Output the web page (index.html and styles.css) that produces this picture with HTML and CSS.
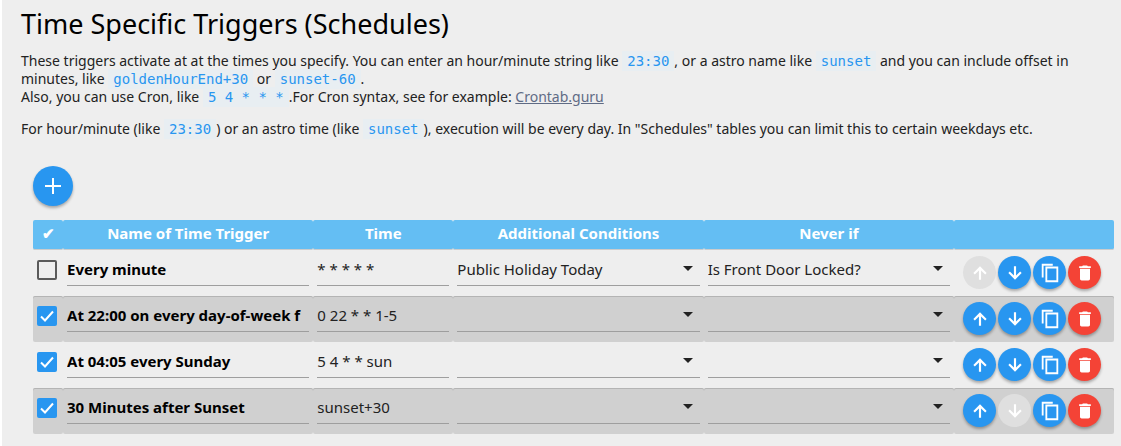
FILE: index.html
```
<!DOCTYPE html>
<html lang="en">
<head>
    <meta charset="UTF-8">
    <meta name="viewport" content="width=device-width, initial-scale=1.0">
    <title>Time Specific Triggers (Schedules)</title>
    <link rel="stylesheet" href="styles.css">
</head>
<body>
    <!-- Icons used by the buttons -->
    <svg class="icon-defs" width="0" height="0" aria-hidden="true">
        <symbol id="icon-add" viewBox="0 0 24 24"><path d="M20 13h-7v7h-2v-7H4v-2h7V4h2v7h7z"/></symbol>
        <symbol id="icon-up" viewBox="0 0 24 24"><path d="M4 12l1.8 1.8L10.700 8.900V20h2.600V8.900l4.900 4.900L20 12l-8-8-8 8z"/></symbol>
        <symbol id="icon-down" viewBox="0 0 24 24"><path d="M20 12l-1.800-1.800-4.900 4.900V4h-2.600v11.100l-4.900-4.900L4 12l8 8 8-8z"/></symbol>
        <symbol id="icon-copy" viewBox="0 0 24 24"><path d="M15 2H3v15h2V4h10V2zm6 3H7v17h14V5zm-2 15H9V7h10v13z"/></symbol>
        <symbol id="icon-delete" viewBox="0 0 24 24"><path d="M6 19c0 1.100.9 2 2 2h8c1.100 0 2-.9 2-2V7H6v12zM19 4h-3.500l-1-1h-5l-1 1H5v2h14V4z"/></symbol>
    </svg>

    <main class="page">
        <h1>Time Specific Triggers (Schedules)</h1>
        <p>These triggers activate at at the times you specify. You can enter an hour/minute string like <code>23:30</code>, or a astro name like <code>sunset</code> and you can include offset in minutes, like <code>goldenHourEnd+30</code> or <code>sunset-60</code>.<br>
        Also, you can use Cron, like <code>5 4 * * *</code>.For Cron syntax, see for example: <a href="https://crontab.guru/">Crontab.guru</a></p>
        <p>For hour/minute (like <code>23:30</code>) or an astro time (like <code>sunset</code>), execution will be every day. In "Schedules" tables you can limit this to certain weekdays etc.</p>

        <div class="table-area">
            <button class="btn btn-add" aria-label="Add"><svg><use href="#icon-add"/></svg></button>

            <table class="triggers">
                <colgroup>
                    <col class="col-active">
                    <col>
                    <col class="col-time">
                    <col>
                    <col>
                    <col class="col-actions">
                </colgroup>
                <thead>
                    <tr>
                        <th>✔</th>
                        <th>Name of Time Trigger</th>
                        <th>Time</th>
                        <th>Additional Conditions</th>
                        <th>Never if</th>
                        <th></th>
                    </tr>
                </thead>
                <tbody>
                    <tr>
                        <td><input type="checkbox" class="check" aria-label="Active"></td>
                        <td><input type="text" class="field name" aria-label="Name" value="Every minute"></td>
                        <td><input type="text" class="field" aria-label="Time" value="* * * * *"></td>
                        <td><select class="field" aria-label="Additional Conditions"><option>Public Holiday Today</option></select></td>
                        <td><select class="field" aria-label="Never if"><option>Is Front Door Locked?</option></select></td>
                        <td>
                            <div class="actions">
                                <button class="btn" aria-label="Move up" disabled><svg><use href="#icon-up"/></svg></button>
                                <button class="btn" aria-label="Move down"><svg><use href="#icon-down"/></svg></button>
                                <button class="btn btn-copy" aria-label="Copy"><svg><use href="#icon-copy"/></svg></button>
                                <button class="btn btn-delete" aria-label="Delete"><svg><use href="#icon-delete"/></svg></button>
                            </div>
                        </td>
                    </tr>
                    <tr>
                        <td><input type="checkbox" class="check" aria-label="Active" checked></td>
                        <td><input type="text" class="field name" aria-label="Name" value="At 22:00 on every day-of-week f"></td>
                        <td><input type="text" class="field" aria-label="Time" value="0 22 * * 1-5"></td>
                        <td><select class="field" aria-label="Additional Conditions"><option></option></select></td>
                        <td><select class="field" aria-label="Never if"><option></option></select></td>
                        <td>
                            <div class="actions">
                                <button class="btn" aria-label="Move up"><svg><use href="#icon-up"/></svg></button>
                                <button class="btn" aria-label="Move down"><svg><use href="#icon-down"/></svg></button>
                                <button class="btn btn-copy" aria-label="Copy"><svg><use href="#icon-copy"/></svg></button>
                                <button class="btn btn-delete" aria-label="Delete"><svg><use href="#icon-delete"/></svg></button>
                            </div>
                        </td>
                    </tr>
                    <tr>
                        <td><input type="checkbox" class="check" aria-label="Active" checked></td>
                        <td><input type="text" class="field name" aria-label="Name" value="At 04:05 every Sunday"></td>
                        <td><input type="text" class="field" aria-label="Time" value="5 4 * * sun"></td>
                        <td><select class="field" aria-label="Additional Conditions"><option></option></select></td>
                        <td><select class="field" aria-label="Never if"><option></option></select></td>
                        <td>
                            <div class="actions">
                                <button class="btn" aria-label="Move up"><svg><use href="#icon-up"/></svg></button>
                                <button class="btn" aria-label="Move down"><svg><use href="#icon-down"/></svg></button>
                                <button class="btn btn-copy" aria-label="Copy"><svg><use href="#icon-copy"/></svg></button>
                                <button class="btn btn-delete" aria-label="Delete"><svg><use href="#icon-delete"/></svg></button>
                            </div>
                        </td>
                    </tr>
                    <tr>
                        <td><input type="checkbox" class="check" aria-label="Active" checked></td>
                        <td><input type="text" class="field name" aria-label="Name" value="30 Minutes after Sunset"></td>
                        <td><input type="text" class="field" aria-label="Time" value="sunset+30"></td>
                        <td><select class="field" aria-label="Additional Conditions"><option></option></select></td>
                        <td><select class="field" aria-label="Never if"><option></option></select></td>
                        <td>
                            <div class="actions">
                                <button class="btn" aria-label="Move up"><svg><use href="#icon-up"/></svg></button>
                                <button class="btn" aria-label="Move down" disabled><svg><use href="#icon-down"/></svg></button>
                                <button class="btn btn-copy" aria-label="Copy"><svg><use href="#icon-copy"/></svg></button>
                                <button class="btn btn-delete" aria-label="Delete"><svg><use href="#icon-delete"/></svg></button>
                            </div>
                        </td>
                    </tr>
                </tbody>
            </table>
        </div>
    </main>
</body>
</html>
```
FILE: styles.css
```
* {
    box-sizing: border-box;
}

body {
    margin: 0;
    border-left: 2px solid #fff;
    background-color: #eee;
    color: #222;
    font-family: "Noto Sans", sans-serif;
    font-size: 14px;
    line-height: 18px;
}

.icon-defs {
    position: absolute;
}

.page {
    min-height: 100vh;
    padding: 8px 7px 12px 19px;
}

h1 {
    margin: 0 0 12px;
    color: #000;
    font-size: 27px;
    font-weight: 400;
    line-height: 32px;
}

p {
    margin: 0 0 14px;
}

code {
    padding: 2px 5px;
    background-color: #e8eef2;
    color: #2896f0;
    font-family: "DejaVu Sans Mono", monospace;
    font-size: 14px;
    line-height: 1;
}

a {
    color: #5f6b85;
}

.table-area {
    padding: 14px 0 0 12px;
}

.btn {
    display: flex;
    align-items: center;
    justify-content: center;
    width: 33px;
    height: 33px;
    padding: 0;
    border: none;
    border-radius: 50%;
    background-color: #2896f0;
    box-shadow: 0 2px 3px rgba(0, 0, 0, 0.3);
    cursor: pointer;
}

.btn svg {
    width: 20px;
    height: 20px;
    fill: #fff;
}

.btn:disabled {
    background-color: #dfdfdf;
    box-shadow: none;
    cursor: default;
}

.btn-delete {
    background-color: #f44336;
}

.btn-copy svg {
    width: 22px;
    height: 22px;
}

.btn-add {
    width: 40px;
    height: 40px;
    margin-bottom: 14px;
}

.btn-add svg {
    width: 24px;
    height: 24px;
}

/* Table */
.triggers {
    width: 100%;
    border-collapse: separate;
    border-spacing: 0;
    table-layout: fixed;
}

.col-active {
    width: 30px;
}

.col-time {
    width: 140px;
}

.col-actions {
    width: 160px;
}

.triggers th {
    height: 30px;
    padding: 0 0 4px;
    border-bottom: 1px solid #ccc;
    border-radius: 2px;
    background-color: #64bef3;
    color: #fff;
    font-size: 15px;
    font-weight: 700;
}

.triggers td {
    height: 46px;
    padding: 2px 4px;
    border-radius: 2px;
    vertical-align: top;
}

.triggers tr:nth-child(even) td {
    background-color: #d0d0d0;
    box-shadow: inset 0 1px #b4b4b4;
}

.field {
    display: block;
    width: 100%;
    height: 34px;
    padding: 0;
    border: none;
    border-bottom: 1px solid #9e9e9e;
    border-radius: 0;
    outline: none;
    background-color: transparent;
    color: #222;
    font-family: "Noto Sans", sans-serif;
    font-size: 15px;
}

.name {
    color: #000;
    font-weight: 700;
}

select.field {
    appearance: none;
    background-image: url("data:image/svg+xml,%3Csvg xmlns='http://www.w3.org/2000/svg' width='10' height='5'%3E%3Cpath d='M0 0h10L5 5z' fill='%23222'/%3E%3C/svg%3E");
    background-repeat: no-repeat;
    background-position: right 7px center;
}

.check {
    appearance: none;
    display: block;
    width: 20px;
    height: 20px;
    margin: 8px 0 0;
    border: 2px solid #5a5a5a;
    border-radius: 2px;
}

.check:checked {
    border: none;
    background: #2896f0 url("data:image/svg+xml,%3Csvg xmlns='http://www.w3.org/2000/svg' width='20' height='20'%3E%3Cpath d='M4 10.500l4 4L16 5.500' fill='none' stroke='%23fff' stroke-width='2'/%3E%3C/svg%3E") center no-repeat;
}

.actions {
    display: flex;
    gap: 2px;
    padding: 4px 0 0 5px;
}
```
